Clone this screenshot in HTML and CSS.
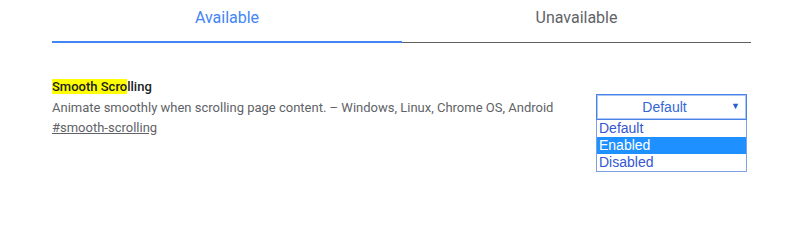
FILE: index.html
```html
<!DOCTYPE html>
<html>
<head>
<meta charset="utf-8">
<link rel="stylesheet" href="styles.css">
</head>
<body>
<div class="page">
  <div class="tabs">
    <div class="tab active">Available</div>
    <div class="tab">Unavailable</div>
  </div>
  <div class="feature">
    <div class="info">
      <div class="title"><mark>Smooth Scro</mark>lling</div>
      <div class="desc">Animate smoothly when scrolling page content. – Windows, Linux, Chrome OS, Android</div>
      <a class="perm" href="#smooth-scrolling">#smooth-scrolling</a>
    </div>
    <div class="control">
      <div class="select"><span class="sel-text">Default</span><span class="arrow">▼</span></div>
      <ul class="options">
        <li>Default</li>
        <li class="hl">Enabled</li>
        <li>Disabled</li>
      </ul>
    </div>
  </div>
</div>
</body>
</html>
```
FILE: styles.css
```css
html, body {
  margin: 0;
  padding: 0;
  background: #fff;
}
.page {
  margin-left: 52px;
  width: 699px;
  font-family: Roboto, "Liberation Sans", sans-serif;
}
.tabs {
  display: flex;
  align-items: flex-start;
  border-bottom: 1px solid #616161;
  height: 42px;
}
.tab {
  flex: 1;
  box-sizing: border-box;
  height: 42px;
  padding-top: 8px;
  text-align: center;
  font-size: 16px;
  line-height: 19px;
  color: #5f6368;
}
.tab.active {
  color: #4285f4;
  height: 43px;
  border-bottom: 2px solid #4285f4;
  margin-bottom: -1px;
  flex: 0 0 350px;
}
.feature {
  display: flex;
  justify-content: space-between;
  margin-top: 34px;
}
.info {
  display: flex;
  flex-direction: column;
  align-items: flex-start;
  font-size: 13px;
  line-height: 20px;
}
.title {
  color: #202124;
  font-weight: 500;
}
mark {
  background: #ffff00;
  color: inherit;
}
.desc {
  color: #5f6368;
  margin-top: 1px;
}
.perm {
  color: #5f6368;
  text-decoration: underline;
}
.control {
  margin-top: 17px;
  margin-right: 4px;
  width: 151px;
  font-family: "Liberation Sans", Arial, sans-serif;
  font-size: 14px;
}
.select {
  box-sizing: border-box;
  height: 26px;
  padding-right: 14px;
  border: 1px solid #4a83e8;
  box-shadow: inset 0 0 0 1px #a9c4f5;
  display: flex;
  align-items: center;
  justify-content: center;
  position: relative;
  color: #3367d6;
}
.arrow {
  position: absolute;
  right: 6px;
  top: 6px;
  font-size: 9px;
  color: #2a5bd0;
}
.options {
  list-style: none;
  margin: 0;
  padding: 0;
  border: 1px solid #7ea1e6;
  border-top: none;
}
.options li {
  height: 17px;
  line-height: 17px;
  padding-left: 2px;
  color: #3456d1;
}
.options li.hl {
  background: #1e90ff;
  color: #fff;
}
```
